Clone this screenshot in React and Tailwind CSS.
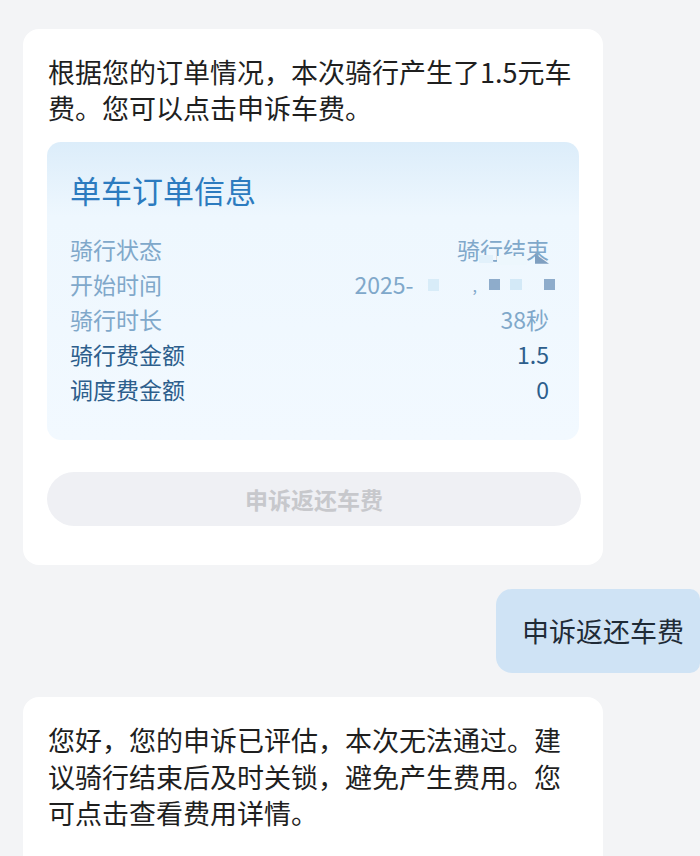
export default function App() {
  const rows = [
    { label: "骑行状态", value: "骑行结束", faded: true, mask: "status" },
    { label: "开始时间", value: "2025-", faded: true, mask: "time" },
    { label: "骑行时长", value: "38秒", faded: true },
    { label: "骑行费金额", value: "1.5" },
    { label: "调度费金额", value: "0" },
  ];

  return (
    <div
      className="min-h-screen w-[700px] overflow-hidden bg-[#f3f4f6] pt-[29px]"
      style={{ fontFamily: '"Noto Sans CJK SC", "Noto Sans", sans-serif' }}
    >
      {/* bot message with order card */}
      <div className="ml-[23px] w-[580px] rounded-[16px] bg-white px-[25px] pt-[25px] pb-[39px]">
        <p className="text-[27px] leading-[36px] text-[#1f1f1f]">
          根据您的订单情况，本次骑行产生了1.5元车费。您可以点击申诉车费。
        </p>

        <div className="-mx-[1px] mt-[16px] h-[298px] rounded-[14px] bg-gradient-to-b from-[#dcedfa] from-0% via-[#eef7fe] via-25% to-[#f2f9ff] pl-[23px] pr-[30px] pt-[28px]">
          <h3 className="text-[31px] leading-[40px] text-[#2c7bbf]">单车订单信息</h3>
          <div className="mt-[22px]">
            {rows.map((r) => (
              <div
                key={r.label}
                className={
                  "flex h-[35px] items-center justify-between text-[23px] " +
                  (r.faded ? "text-[#80a8ca]" : "text-[#2d5e8c]")
                }
              >
                <span>{r.label}</span>
                {r.mask === "time" ? (
                  <span className="flex items-center">
                    <span>{r.value}</span>
                    <span className="ml-[14px] inline-block h-[12px] w-[11px] bg-[#d8ecf8]" />
                    <span className="ml-[34px] text-[16px]">,</span>
                    <span className="ml-[12px] inline-block h-[11px] w-[11px] bg-[#8eaccb]" />
                    <span className="ml-[10px] inline-block h-[11px] w-[12px] bg-[#d3e9f7]" />
                    <span className="ml-[22px] -mr-[6px] inline-block h-[11px] w-[11px] bg-[#8eaccb]" />
                  </span>
                ) : r.mask === "status" ? (
                  <span className="relative">
                    {r.value}
                    <span className="absolute bottom-[4px] left-[22px] h-[8px] w-[14px] bg-[#e2f1fb]" />
                    <span className="absolute bottom-[2px] left-[40px] h-[9px] w-[30px] bg-[#edf7fd]" />
                    <span className="absolute bottom-[3px] right-0 h-[10px] w-[14px] bg-[#7f9fc0] [clip-path:polygon(0_0,100%_100%,0_100%)]" />
                  </span>
                ) : (
                  <span>{r.value}</span>
                )}
              </div>
            ))}
          </div>
        </div>

        <button className="-mx-[1px] mt-[32px] flex h-[54px] w-[534px] items-center justify-center rounded-full bg-[#eff0f4] text-[23px] font-bold text-[#c7c8cc]">
          申诉返还车费
        </button>
      </div>

      {/* user message */}
      <div className="mt-[24px] flex justify-end">
        <div className="flex h-[84px] w-[204px] items-center rounded-l-[16px] rounded-r-[10px] bg-[#cfe3f5] pl-[26px] text-[27px] text-[#1f2b37]">
          申诉返还车费
        </div>
      </div>

      {/* bot reply */}
      <div className="mt-[24px] ml-[23px] w-[580px] rounded-[16px] bg-white px-[25px] pt-[25px] pb-[40px]">
        <p className="text-[27px] leading-[36.5px] text-[#1f1f1f]">
          您好，您的申诉已评估，本次无法通过。建议骑行结束后及时关锁，避免产生费用。您可点击查看费用详情。
        </p>
      </div>
    </div>
  );
}
